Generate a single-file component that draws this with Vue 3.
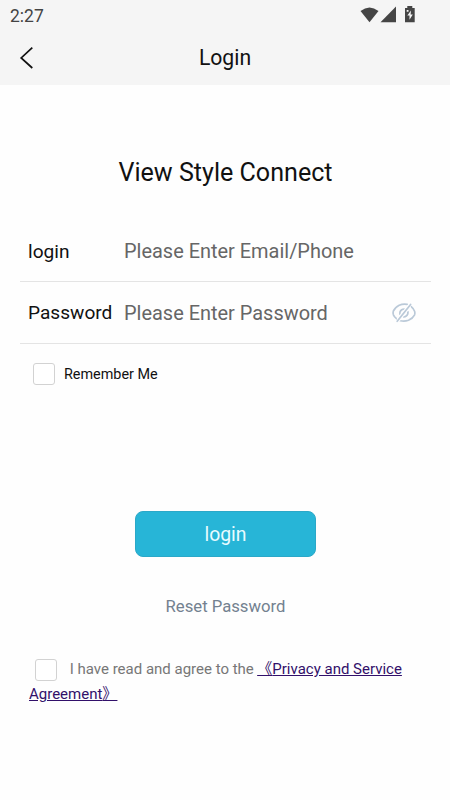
<script setup>
import { ref } from 'vue'

const account = ref('')
const password = ref('')
const visible = ref(false)
</script>

<template>
  <div class="page">
    <header class="top">
      <div class="status">
        <span class="time">2:27</span>
        <svg class="signals" width="58" height="20" viewBox="0 0 58 20">
          <path d="M.5 6Q9.5 -1.2 18.5 6L9.5 17.3Z" />
          <path d="M20.5 17.3L36 1.5V17.3Z" />
          <path d="M45 2.9H47.3V1H52.3V2.9H54.7V17.2H45Z" />
          <path class="bolt" d="M51 5.5L47.3 10.5H49.5V14.7L52.8 9.4H50.6ZM46.7 5H48.5V6.7H46.7Z" />
        </svg>
      </div>
      <div class="nav">
        <svg class="back" width="16" height="24" viewBox="0 0 16 24">
          <path d="M13.3 1.7L2.2 12L13.3 22" />
        </svg>
        <span class="nav-title">Login</span>
      </div>
    </header>

    <main>
      <h1>View Style Connect</h1>
      <form @submit.prevent>
        <label class="row">
          <span class="name">login</span>
          <input v-model="account" type="text" placeholder="Please Enter Email/Phone" />
        </label>
        <label class="row">
          <span class="name">Password</span>
          <input v-model="password" :type="visible ? 'text' : 'password'" placeholder="Please Enter Password" />
          <svg class="eye" width="26" height="22" viewBox="0 0 26 22" @click="visible = !visible">
            <path d="M16.2 2.3Q12 1.5 8.2 3.2Q4 5.2 2.3 9.2Q1.7 11 2.4 12.8Q3.4 15 5.5 16.7" />
            <path d="M20.2 4.7Q22.6 6.7 23.6 9.2Q24.2 11 23.6 12.8Q21.7 16.5 17.5 18.3Q13.3 19.8 9.3 18.7" />
            <path d="M13.2 7.2Q10.2 7.2 9.1 9.7Q8.7 11 9 12.4M16.9 9.6Q17.3 12.5 15.2 14Q14 14.9 12.6 14.8" />
            <path class="gap" d="M18.6 3.8L7.2 18" />
            <path d="M19.6 2.5L6.2 19.3" />
          </svg>
        </label>
        <label class="remember"><input type="checkbox" /><span>Remember Me</span></label>
        <button class="submit">login</button>
        <a class="reset">Reset Password</a>
        <div class="terms">
          <input type="checkbox" /><span class="agree">I have read and agree to the </span><a class="policy">&nbsp;<span class="mark open">《</span>Privacy and Service<br />Agreement<span class="mark close">》</span>&nbsp;</a>
        </div>
      </form>
    </main>
  </div>
</template>

<style>
body { background: #fff; }
</style>

<style scoped>
.page { height: 800px; overflow: hidden; background: #fefefe; font-family: Roboto, "Noto Sans CJK SC", sans-serif; color: #111; }
.top { height: 85px; background: #f5f5f5; }
.status { height: 31px; display: flex; justify-content: space-between; padding: 0 30px 0 10px; }
.time { font-size: 17.5px; line-height: 32px; color: #444; }
.signals { margin: 5px 2px 0 0; fill: #454545; }
.signals .bolt { fill: #f5f5f5; }
.nav { height: 54px; display: grid; grid-template-columns: 60px 1fr 60px; align-items: center; }
.back { margin-left: 19px; fill: none; stroke: #111; stroke-width: 1.7; }
.nav-title { text-align: center; font-size: 21.2px; line-height: 54px; }
h1 { margin: 72px 0 32px; padding-left: 1px; text-align: center; font-size: 25.1px; line-height: 32px; font-weight: 400; }
form { display: flex; flex-direction: column; align-items: stretch; padding: 0 19px 0 20px; }
.row { box-sizing: border-box; height: 61px; display: flex; align-items: center; padding: 0 14px 0 8px; border-bottom: 1px solid #e4e4e4; }
.row:nth-child(2) { height: 62px; }
.name { width: 96px; font-size: 19.1px; }
.row input { flex: 1; min-width: 0; border: 0; outline: 0; padding: 0; background: none; font: 19.95px Roboto, sans-serif; color: #111; }
.row input::placeholder { color: #666; opacity: 1; }
.eye { fill: none; stroke: #bac9d8; stroke-width: 1.7; stroke-linecap: round; }
.eye .gap { stroke: #fefefe; stroke-width: 4; stroke-linecap: butt; }
input[type="checkbox"] { appearance: none; box-sizing: border-box; width: 22px; height: 22px; margin: 0; border: 1px solid #d2d2d2; border-radius: 3px; background: #fff; }
.remember { display: flex; align-items: center; gap: 9px; margin: 19px 0 0 13px; height: 22px; font-size: 14.4px; }
.submit { align-self: center; width: 181px; height: 46px; margin: 126px 0 0; padding: 0; border: 1px solid #2ba8c8; border-radius: 8px; background: #27b5d7; color: #e9fbff; font: 19.4px Roboto, sans-serif; }
.reset { margin-top: 38px; text-align: center; font-size: 16.7px; line-height: 24px; color: #738190; }
.terms { margin: 38px 0 0 9px; font-size: 15px; line-height: 25px; white-space: nowrap; color: #777; }
.terms input { vertical-align: -7px; margin: 0 12.7px 0 6px; }
.policy { color: #32106a; text-decoration: underline; }
.mark { line-height: 1; }
.open { margin-left: -4px; }
.close { margin-right: -4px; }
</style>
